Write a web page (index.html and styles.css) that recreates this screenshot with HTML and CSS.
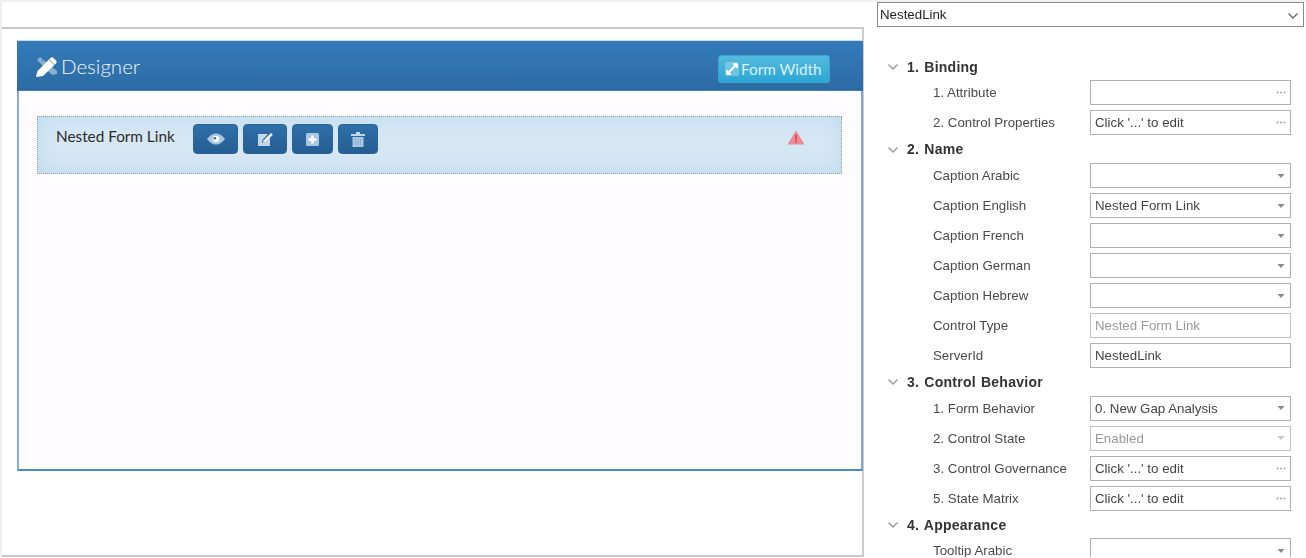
FILE: index.html
```html
<!DOCTYPE html>
<html lang="en">
<head>
<meta charset="utf-8">
<title>Designer</title>
<link rel="stylesheet" href="styles.css">
</head>
<body>
<svg class="defs" width="0" height="0" aria-hidden="true">
  <symbol id="chev" viewBox="0 0 12 8"><path d="M1.500 1.500 6 6l4.500-4.500" fill="none" stroke="currentColor" stroke-width="1.400"/></symbol>
  <symbol id="dots" viewBox="0 0 10 3"><circle cx="1.500" cy="1.500" r="1"/><circle cx="5" cy="1.500" r="1"/><circle cx="8.500" cy="1.500" r="1"/></symbol>
  <symbol id="caret" viewBox="0 0 9 5"><path d="M0 0h9L4.500 5z"/></symbol>
</svg>
<div class="app">
  <main class="left">
    <div class="topbar"></div>
    <div class="canvas">
      <section class="panel">
        <header class="panel-head">
          <div class="title">
            <svg class="title-icon" viewBox="0 0 22 21">
              <path d="M4 1 1 4l15 15 5-1 0-3z" fill="#9dbfdd" opacity=".8"/>
              <path d="M6 5 8 3M10 9l2-2M14 13l2-2" stroke="#337ab9" stroke-width="1"/>
              <path d="M0 21l1.500-6L14.500 2a2.200 2.200 0 0 1 3 0l2.500 2.500a2.200 2.200 0 0 1 0 3L7 20z" fill="#fff"/>
              <path d="M13 3.500 18.500 9" stroke="#337ab9" stroke-width=".8"/>
            </svg>
            <span>Designer</span>
          </div>
          <button class="width-btn">
            <svg class="width-icon" viewBox="0 0 14 14">
              <rect width="14" height="14" rx="1.500" fill="#8fd0ea" opacity=".65"/>
              <path d="M2 12 12 2M2 12V8M2 12h4M12 2H8M12 2v4" stroke="#fff" stroke-width="1.800" fill="none"/>
            </svg>
            <span>Form Width</span>
          </button>
        </header>
        <div class="panel-body">
          <div class="item">
            <span class="item-label">Nested Form Link</span>
            <div class="tools">
              <button class="tool tool-eye">
                <svg viewBox="0 0 18 12" width="18" height="12"><path d="M0 6c2.500-3.500 5.500-5.500 9-5.500s6.500 2 9 5.500c-2.500 3.500-5.500 5.500-9 5.500S2.500 9.500 0 6z" fill="#a9c7e0"/><circle cx="9" cy="6" r="3.300" fill="#fff"/><circle cx="7.800" cy="5.200" r="1.300" fill="#2d6ba3"/></svg>
              </button>
              <button class="tool tool-edit">
                <svg viewBox="0 0 17 16" width="17" height="16"><path d="M1 3h10L5.500 9 5 12l3-.5L13 6.500V15H1z" fill="#c2d8ea"/><path d="M6.500 9.500 14 2l1.800 1.800-7.500 7.500-2.300.5z" fill="#fff"/></svg>
              </button>
              <button class="tool tool-plus">
                <svg viewBox="0 0 13 13" width="13" height="13"><rect width="13" height="13" rx="1.500" fill="#a9c7e0"/><path d="M5.200 2.500h2.600v2.700h2.700v2.600H7.800v2.700H5.200V7.800H2.500V5.200h2.700z" fill="#fff"/></svg>
              </button>
              <button class="tool tool-trash">
                <svg viewBox="0 0 14 15" width="14" height="15"><path d="M0 2h14v2H0zM5 0h4v2H5z" fill="#c2d8ea"/><path d="M1.500 5h11v10h-11z" fill="#a9c7e0"/><path d="M4.500 6.500v7M7 6.500v7M9.500 6.500v7" stroke="#8fb3d2"/></svg>
              </button>
            </div>
            <svg class="warn" viewBox="0 0 18 15" width="18" height="15"><path d="M9 .5 17.500 14.500H.5z" fill="#ec8b94"/><path d="M8.300 5h1.400l-.2 5.200h-1zM8.300 11h1.400v1.500H8.300z" fill="#e0202e"/></svg>
          </div>
        </div>
      </section>
    </div>
  </main>

  <aside class="right">
    <div class="picker">
      <span>NestedLink</span>
      <svg class="picker-chev"><use href="#chev"/></svg>
    </div>
    <div class="props">
      <div class="sec"><svg class="sec-chev"><use href="#chev"/></svg>1. Binding</div>
      <div class="row"><span class="lbl">1. Attribute</span><div class="field"><span></span><svg class="dots"><use href="#dots"/></svg></div></div>
      <div class="row"><span class="lbl">2. Control Properties</span><div class="field"><span>Click '...' to edit</span><svg class="dots"><use href="#dots"/></svg></div></div>

      <div class="sec"><svg class="sec-chev"><use href="#chev"/></svg>2. Name</div>
      <div class="row"><span class="lbl">Caption Arabic</span><div class="field"><span></span><svg class="caret"><use href="#caret"/></svg></div></div>
      <div class="row"><span class="lbl">Caption English</span><div class="field"><span>Nested Form Link</span><svg class="caret"><use href="#caret"/></svg></div></div>
      <div class="row"><span class="lbl">Caption French</span><div class="field"><span></span><svg class="caret"><use href="#caret"/></svg></div></div>
      <div class="row"><span class="lbl">Caption German</span><div class="field"><span></span><svg class="caret"><use href="#caret"/></svg></div></div>
      <div class="row"><span class="lbl">Caption Hebrew</span><div class="field"><span></span><svg class="caret"><use href="#caret"/></svg></div></div>
      <div class="row"><span class="lbl">Control Type</span><div class="field muted"><span>Nested Form Link</span></div></div>
      <div class="row"><span class="lbl">ServerId</span><div class="field"><span>NestedLink</span></div></div>

      <div class="sec"><svg class="sec-chev"><use href="#chev"/></svg>3. Control Behavior</div>
      <div class="row"><span class="lbl">1. Form Behavior</span><div class="field"><span>0. New Gap Analysis</span><svg class="caret"><use href="#caret"/></svg></div></div>
      <div class="row"><span class="lbl">2. Control State</span><div class="field muted"><span>Enabled</span><svg class="caret"><use href="#caret"/></svg></div></div>
      <div class="row"><span class="lbl">3. Control Governance</span><div class="field"><span>Click '...' to edit</span><svg class="dots"><use href="#dots"/></svg></div></div>
      <div class="row"><span class="lbl">5. State Matrix</span><div class="field"><span>Click '...' to edit</span><svg class="dots"><use href="#dots"/></svg></div></div>

      <div class="sec"><svg class="sec-chev"><use href="#chev"/></svg>4. Appearance</div>
      <div class="row"><span class="lbl">Tooltip Arabic</span><div class="field"><span></span><svg class="caret"><use href="#caret"/></svg></div></div>
    </div>
  </aside>
</div>
</body>
</html>
```
FILE: styles.css
```css
* { box-sizing: border-box; }
html, body { margin: 0; height: 100%; background: #fff; overflow: hidden; }
.defs { position: absolute; }
.app {
  display: flex;
  height: 558px;
  border-top: 2px solid #f0f0f0;
  border-left: 2px solid #f0f0f0;
  font-family: "Liberation Sans", Arial, sans-serif;
  filter: blur(.45px);
}
.left { width: 862px; flex: none; display: flex; flex-direction: column; height: 555px; border-bottom: 2px solid #c8c8c8; }
.topbar { height: 27px; border-bottom: 2px solid #c8c8c8; flex: none; }
.canvas { padding: 11px 0 0 15px; flex: 1; border-right: 2px solid #cccccc; }
.panel { height: 431px; margin-right: -1px; border: 2px solid #4a8cca; border-top: 0; border-left-color: #86aed6; border-right-color: #7fa6cc; background: #fefcfe; }
.panel-head {
  height: 51px;
  margin: 0 -2px;
  padding: 13px 33px 0 19px;
  display: flex;
  justify-content: space-between;
  align-items: flex-start;
  background: linear-gradient(#337ab9, #2e6ea8 85%, #2b6aa2);
  border-top: 1px solid #c9d9e8;
  border-bottom: 1px solid #3d7fb8;
}
.title { display: flex; align-items: center; gap: 3px; color: #f1f6fb; font: 300 20.500px/24px Lato, sans-serif; }
.title-icon { width: 22px; height: 21px; flex: none; }
.width-btn {
  width: 112px;
  height: 28px;
  margin-top: 1px;
  padding: 0 0 0 6px;
  display: flex;
  align-items: center;
  gap: 2px;
  color: #d9f1fa;
  background: linear-gradient(#55b9de, #2ba6d4);
  border: 1px solid #3aa6d0;
  border-radius: 3px;
  font: 400 15.300px/20px Lato, sans-serif;
}
.width-icon { width: 14px; height: 14px; flex: none; }
.panel-body { padding: 25px 19px 0 18px; }
.item {
  height: 58px;
  padding: 0 36px 0 18px;
  display: flex;
  align-items: flex-start;
  border: 1px dotted #8c9aa5;
  background: #d6e7f4;
  box-shadow: inset 0 0 22px #bcdbf0;
}
.item-label { margin-top: 8px; color: #2b2b2b; font: 400 15.300px/22px Lato, sans-serif; width: 137px; flex: none; }
.tools { display: flex; gap: 5px; margin-top: 7px; }
.tool {
  height: 30px;
  padding: 0;
  display: flex;
  align-items: center;
  justify-content: center;
  background: linear-gradient(#2f6fa9, #255e92);
  border: 1px solid #2a6496;
  border-radius: 4px;
}
.tool-eye { width: 45px; }
.tool-edit { width: 44px; }
.tool-plus { width: 41px; }
.tool-trash { width: 40px; }
.warn { margin: 13px 0 0 auto; }

.right { flex: 1; min-width: 0; height: 555px; overflow: hidden; font-size: 13.300px; color: #444; padding-left: 13px; }
.picker {
  width: 427px;
  height: 25px;
  padding: 0 2px;
  display: flex;
  align-items: center;
  justify-content: space-between;
  border: 1px solid #8a8a8a;
  color: #222;
  line-height: 20px;
}
.picker-chev { width: 12px; height: 8px; margin: 2px 2px 0 0; color: #666; }
.props { padding: 28.330px 0 0 10px; }
.sec {
  height: 22.670px;
  display: flex;
  align-items: center;
  gap: 8px;
  font-size: 14px;
  font-weight: 700;
  letter-spacing: .25px;
  word-spacing: 1px;
  color: #333;
  line-height: 20px;
}
.sec-chev { width: 12px; height: 8px; color: #999; flex: none; margin-top: 1px; }
.row { height: 30px; display: flex; align-items: center; padding-left: 46px; }
.lbl { width: 157px; flex: none; white-space: nowrap; color: #4a4a4a; }
.field {
  width: 201px;
  height: 25px;
  padding: 0 4px;
  display: flex;
  align-items: center;
  justify-content: space-between;
  border: 1px solid #b0b0b0;
  color: #444;
  white-space: nowrap;
}
.field.muted { color: #999; border-color: #c0c0c0; }
.dots { width: 10px; height: 3px; fill: #a0a0a0; }
.caret { width: 8px; height: 4px; fill: #8c8c8c; margin-right: 1px; }
.muted .caret { fill: #c8c8c8; }
```
